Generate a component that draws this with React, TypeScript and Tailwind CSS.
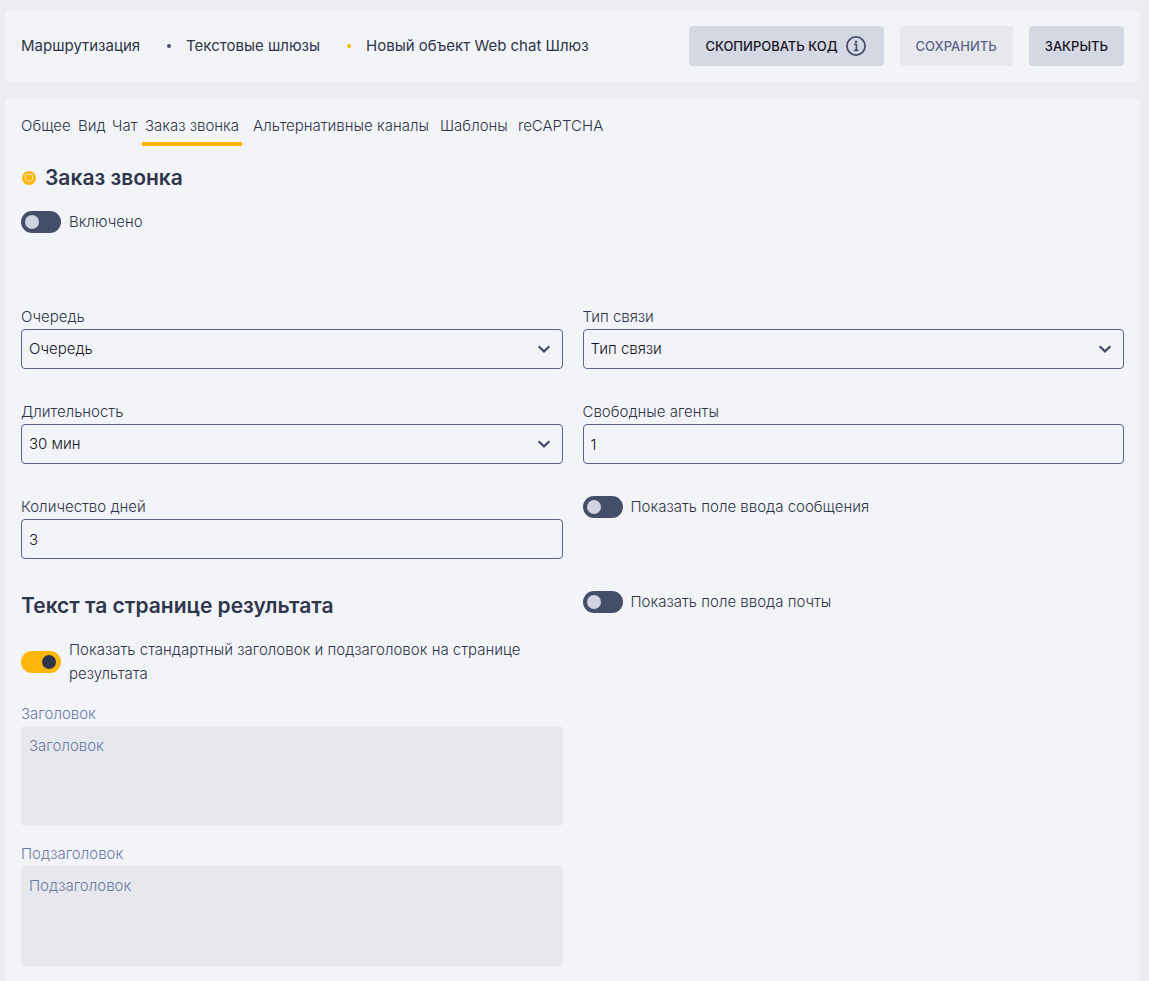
import { useState, type ReactNode } from "react"

const tabs = [
  { label: "Общее", className: "w-[57px] text-left" },
  { label: "Вид", className: "w-[34px] text-left" },
  { label: "Чат", className: "w-[30px] text-left" },
  { label: "Заказ звонка", className: "w-[100px]" },
  { label: "Альтернативные каналы", className: "w-[198px]" },
  { label: "Шаблоны", className: "w-[78px] text-left" },
  { label: "reCAPTCHA", className: "w-[90px] text-left" },
]

function Field({ id, label, muted, children }: { id: string; label: string; muted?: boolean; children: ReactNode }) {
  return (
    <div className="flex flex-col">
      <label htmlFor={id} className={muted ? "text-[#6a7ba8]" : "text-[#2f3448]"}>
        {label}
      </label>
      {children}
    </div>
  )
}

function SelectField({ id, label, options }: { id: string; label: string; options: string[] }) {
  return (
    <Field id={id} label={label}>
      <div className="relative">
        <select
          id={id}
          className="block h-10 w-full appearance-none rounded border border-[#5b6489] bg-transparent px-[7px] text-[#15161f] outline-none"
        >
          {options.map((option) => (
            <option key={option}>{option}</option>
          ))}
        </select>
        <svg
          className="pointer-events-none absolute top-3 right-[11px] h-4 w-4 text-[#444e6b]"
          viewBox="0 0 16 16"
          fill="none"
          stroke="currentColor"
          strokeWidth={2.2}
        >
          <path d="M2.6 5.2 8 10.4l5.4-5.2" />
        </svg>
      </div>
    </Field>
  )
}

function InputField({ id, label, value }: { id: string; label: string; value: string }) {
  return (
    <Field id={id} label={label}>
      <input
        id={id}
        type="text"
        defaultValue={value}
        className="block h-10 w-full rounded border border-[#5b6489] bg-transparent px-[7px] text-[#15161f] outline-none"
      />
    </Field>
  )
}

function TextareaField({ id, label }: { id: string; label: string }) {
  return (
    <Field id={id} label={label} muted>
      <textarea
        id={id}
        disabled
        placeholder={label}
        className="block h-[100px] w-full resize-none rounded bg-[#e7e8ed] p-2 placeholder:text-[#6a7ba8]"
      />
    </Field>
  )
}

function Toggle({ label, defaultChecked }: { label: string; defaultChecked?: boolean }) {
  return (
    <label className="flex items-center gap-2 text-[#2f3448]">
      <input
        type="checkbox"
        role="switch"
        defaultChecked={defaultChecked}
        className="flex h-[22px] w-10 shrink-0 cursor-pointer appearance-none items-center rounded-full bg-[#444e6b] px-1 before:h-3.5 before:w-3.5 before:rounded-full before:bg-[#cfd4e0] checked:justify-end checked:bg-[#ffb60a] checked:pr-[5px] checked:before:bg-[#2f364c]"
      />
      <span>{label}</span>
    </label>
  )
}

export default function App() {
  const [active, setActive] = useState("Заказ звонка")

  return (
    <div className="flex min-h-screen flex-col gap-4 bg-[#ecedf2] pt-2.5 pr-[9px] pl-[5px] font-['Inter',sans-serif] text-[15px] leading-6 font-light">
      <header className="flex items-center justify-between rounded bg-[#f3f4f8] p-4">
        <nav className="flex items-center font-normal text-[#2f3448]">
          <a href="#routing">Маршрутизация</a>
          <span className="mr-[15px] ml-[27px] h-1 w-1 rounded-full bg-[#444e6b]" />
          <a href="#gateways">Текстовые шлюзы</a>
          <span className="mr-[15px] ml-[27px] h-1 w-1 rounded-full bg-[#ffb60a]" />
          <span>Новый объект Web chat Шлюз</span>
        </nav>
        <div className="flex gap-4 text-[13px] font-medium text-[#15161f]">
          <button className="flex h-10 items-center gap-2 rounded bg-[#d4d8e2] pr-[18px] pl-4">
            СКОПИРОВАТЬ КОД
            <svg className="h-5 w-5 text-[#444e6b]" viewBox="0 0 20 20" fill="none" stroke="currentColor">
              <circle cx="10" cy="10" r="9.1" strokeWidth={1.8} />
              <path d="M8.2 8.4h2.2v6M8 14.4h4.4" strokeWidth={1.6} />
              <circle cx="10" cy="5.8" r="1.2" fill="currentColor" stroke="none" />
            </svg>
          </button>
          <button disabled className="h-10 rounded bg-[#e7e8ed] px-4 text-[#5b6489]">
            СОХРАНИТЬ
          </button>
          <button className="h-10 rounded bg-[#d4d8e2] px-4">ЗАКРЫТЬ</button>
        </div>
      </header>

      <main className="flex-1 rounded-t bg-[#f3f4f8] px-4 pt-4 pb-[15px]">
        <div role="tablist" className="flex text-[#2f3448]">
          {tabs.map((tab) => (
            <button
              key={tab.label}
              role="tab"
              aria-selected={active === tab.label}
              onClick={() => setActive(tab.label)}
              className={`h-8 border-b-4 pb-1 whitespace-nowrap ${tab.className} ${
                active === tab.label ? "border-[#ffb60a]" : "border-transparent"
              }`}
            >
              {tab.label}
            </button>
          ))}
        </div>

        <h2 className="mt-4 flex h-8 items-center gap-[9px] text-[21px] font-semibold text-[#2f364c]">
          <svg className="ml-px h-3.5 w-3.5" viewBox="0 0 14 14" fill="none">
            <circle cx="7" cy="7" r="7" fill="#ffb60a" />
            <path
              d="M4 3.4h6l.6.6v5l-.6.6H8.4L7 11 5.6 9.6H4L3.4 9V4z"
              stroke="#fdeaba"
              strokeWidth={1}
            />
          </svg>
          Заказ звонка
        </h2>

        <div className="mt-4">
          <Toggle label="Включено" />
        </div>

        <div className="mt-[71px] grid grid-cols-2 gap-5">
          <div className="flex flex-col gap-[31px]">
            <SelectField id="queue" label="Очередь" options={["Очередь"]} />
            <SelectField id="duration" label="Длительность" options={["30 мин", "60 мин"]} />
            <InputField id="days" label="Количество дней" value="3" />
            <div className="flex flex-col gap-4">
              <h2 className="text-[21px] leading-8 font-semibold text-[#2f364c]">Текст та странице результата</h2>
              <Toggle label="Показать стандартный заголовок и подзаголовок на странице результата" defaultChecked />
              <TextareaField id="title" label="Заголовок" />
              <TextareaField id="subtitle" label="Подзаголовок" />
            </div>
          </div>
          <div className="flex flex-col gap-[31px]">
            <SelectField id="connection" label="Тип связи" options={["Тип связи"]} />
            <InputField id="agents" label="Свободные агенты" value="1" />
            <div className="h-16">
              <Toggle label="Показать поле ввода сообщения" />
            </div>
            <Toggle label="Показать поле ввода почты" />
          </div>
        </div>
      </main>
    </div>
  )
}
